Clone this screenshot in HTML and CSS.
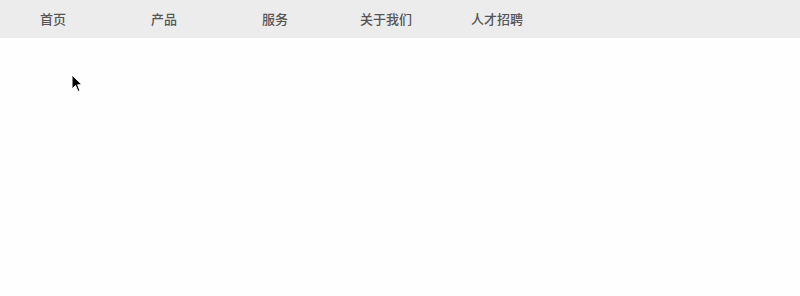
FILE: index.html
```html
<!DOCTYPE html>
<html lang="zh">
<head>
<meta charset="utf-8">
<link rel="stylesheet" href="styles.css">
</head>
<body>
<nav class="nav">
  <ul class="menu">
    <li class="item">首页</li>
    <li class="item">产品</li>
    <li class="item">服务</li>
    <li class="item">关于我们</li>
    <li class="item">人才招聘</li>
  </ul>
</nav>
<svg class="cursor" width="12" height="19" viewBox="0 0 12 19">
  <path d="M1 1 L1 15 L4.5 11.5 L7 17.5 L9 16.6 L6.6 10.8 L11 10.8 Z" fill="#000" stroke="#fff" stroke-width="1"/>
</svg>
</body>
</html>
```
FILE: styles.css
```css
html, body {
  margin: 0;
  padding: 0;
  background: #fefefe;
  font-family: "Noto Sans CJK SC", "Noto Sans", sans-serif;
}
.nav {
  background: #ececec;
  height: 38px;
}
.menu {
  list-style: none;
  margin: 0;
  padding: 0;
  display: flex;
  gap: 5px;
  height: 100%;
}
.item {
  width: 106px;
  text-align: center;
  font-size: 13px;
  font-weight: 500;
  line-height: 37px;
  color: #555;
}
.cursor {
  position: absolute;
  left: 71px;
  top: 74px;
}
```
